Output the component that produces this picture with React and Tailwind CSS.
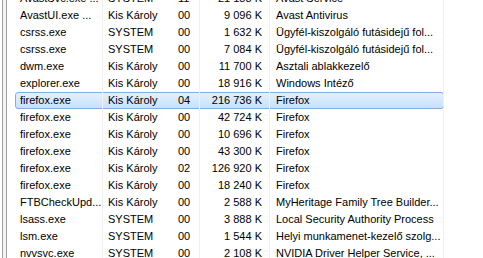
import React from "react";

const rows = [
  ["AvastSvc.exe ...", "SYSTEM", "11", "21 188 K", "Avast Service"],
  ["AvastUI.exe ...", "Kis Károly", "00", "9 096 K", "Avast Antivirus"],
  ["csrss.exe", "SYSTEM", "00", "1 632 K", "Ügyfél-kiszolgáló futásidejű fol..."],
  ["csrss.exe", "SYSTEM", "00", "7 084 K", "Ügyfél-kiszolgáló futásidejű fol..."],
  ["dwm.exe", "Kis Károly", "00", "11 700 K", "Asztali ablakkezelő"],
  ["explorer.exe", "Kis Károly", "00", "18 916 K", "Windows Intéző"],
  ["firefox.exe", "Kis Károly", "04", "216 736 K", "Firefox", true],
  ["firefox.exe", "Kis Károly", "00", "42 724 K", "Firefox"],
  ["firefox.exe", "Kis Károly", "00", "10 696 K", "Firefox"],
  ["firefox.exe", "Kis Károly", "00", "43 300 K", "Firefox"],
  ["firefox.exe", "Kis Károly", "02", "126 920 K", "Firefox"],
  ["firefox.exe", "Kis Károly", "00", "18 240 K", "Firefox"],
  ["FTBCheckUpd...", "Kis Károly", "00", "2 588 K", "MyHeritage Family Tree Builder..."],
  ["lsass.exe", "SYSTEM", "00", "3 888 K", "Local Security Authority Process"],
  ["lsm.exe", "SYSTEM", "00", "1 544 K", "Helyi munkamenet-kezelő szolg..."],
  ["nvvsvc.exe", "SYSTEM", "00", "2 108 K", "NVIDIA Driver Helper Service, ..."],
];

export default function App() {
  return (
    <div
      className="w-[483px] h-[258px] overflow-hidden bg-white flex text-[11px] text-black"
      style={{ fontFamily: '"Liberation Sans", Arial, sans-serif' }}
    >
      <div className="flex h-full shrink-0">
        <div className="w-[2px] bg-white" />
        <div className="w-[1px] bg-[#a0a0a0]" />
        <div className="w-[3px] bg-[#f4f4f4]" />
        <div className="w-[1px] bg-[#a0a0a0]" />
      </div>
      <div className="flex flex-col mt-[-10px] shrink-0">
        {rows.map((r, i) => (
          <div key={i} className="relative flex h-[17px] items-center leading-[17px]">
            {r[5] && (
              <div className="absolute left-[8px] top-0 w-[429px] h-[17px] rounded-[3px] border border-[#84acdd] bg-gradient-to-b from-[#e4f0fd] to-[#c9e0fc]" />
            )}
            <div className="relative w-[96px] h-full pl-[13px] border-r border-[#f0f0f0] whitespace-nowrap">{r[0]}</div>
            <div className="relative w-[70px] h-full pl-[5px] whitespace-nowrap">{r[1]}</div>
            <div className="relative w-[27px] h-full pl-[5px] border-r border-[#f0f0f0]">{r[2]}</div>
            <div className="relative w-[70px] h-full pr-[7px] text-right border-r border-[#f0f0f0] whitespace-nowrap">{r[3]}</div>
            <div className="relative w-[174px] h-full pl-[6px] border-r border-[#f0f0f0] whitespace-nowrap overflow-hidden">{r[4]}</div>
          </div>
        ))}
      </div>
    </div>
  );
}
